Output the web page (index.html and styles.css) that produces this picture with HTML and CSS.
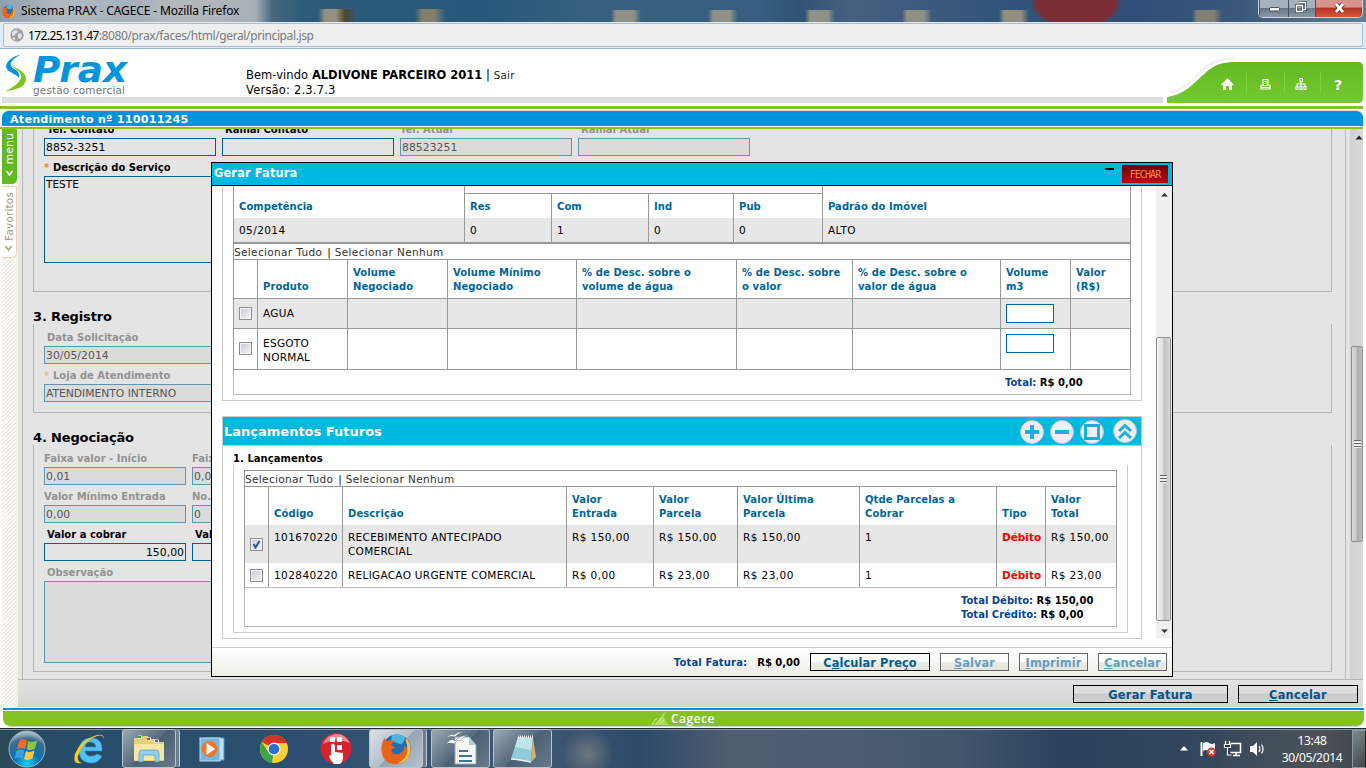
FILE: index.html
```html
<!DOCTYPE html>
<html lang="pt-BR">
<head>
<meta charset="utf-8">
<title>Sistema PRAX - CAGECE</title>
<link rel="stylesheet" href="styles.css">
</head>
<body>
<div class="screen">
  <div class="titlebar">
    <svg class="ff-small" viewBox="0 0 54 54"><use href="#firefox"/></svg>
    <span class="window-title">Sistema PRAX - CAGECE - Mozilla Firefox</span>
    <div class="win-controls">
      <span class="wc wc-min"><svg width="28" height="16"><rect x="9.5" y="7.500" width="10" height="3.500" rx="1" fill="#fff" stroke="#4a5563"/></svg></span>
      <span class="wc wc-max"><svg width="26" height="16"><path d="M9.500 2.500h7v7h-2M7.500 5.500h6v6h-6z" fill="none" stroke="#44505f" stroke-width="3"/><path d="M9.500 2.500h7v7h-2M7.500 5.500h6v6h-6z" fill="none" stroke="#fff" stroke-width="1.400"/></svg></span>
      <span class="wc wc-close"><svg width="46" height="16"><path d="M20 4l7 8M27 4l-7 8" stroke="#5b3a40" stroke-width="4.500"/><path d="M20 4l7 8M27 4l-7 8" stroke="#fff" stroke-width="2.800"/></svg></span>
    </div>
  </div>
  <div class="urlbar">
    <div class="urlfield">
      <svg width="14" height="14" viewBox="0 0 14 14"><circle cx="7" cy="7" r="6.700" fill="#a3a3a3"/><path d="M2 4l3-2 3 1-1 2-2 1-1 2-2-1zM8 6l3-1 1 3-2 3-2-1zM3 9l2 1 0 2-2-1z" fill="#e4e4e4"/></svg>
      <span class="url"><b>172.25.131.47</b>:8080/prax/faces/html/geral/principal.jsp</span>
    </div>
  </div>

  <header class="header">
    <svg class="logo" width="130" height="50" viewBox="0 0 130 50">
      <path d="M20 5.500C8 8 1 17 8 22c4 3 8 4 10 7 1-5-1-7-5-9-6-4-4-9 7-14.500z" fill="#0095de"/>
      <path d="M11 17.500c10 3 18 10 12 18-4 4-9 5-19 7 9-5 15-9 16-14 1-4-3-7-9-11z" fill="#7fc31c"/>
      <text class="logo-name" x="32" y="33" textLength="94" lengthAdjust="spacingAndGlyphs">Prax</text>
      <text class="logo-sub" x="32" y="44.500" textLength="92">gestão comercial</text>
    </svg>
    <div class="welcome">
      <div>Bem-vindo <b>ALDIVONE PARCEIRO 2011</b> | <a>Sair</a></div>
      <div class="version">Versão: 2.3.7.3</div>
    </div>
    <svg class="nav-tab" width="203" height="56" viewBox="0 0 203 56">
      <defs><linearGradient id="gt" x1="0" y1="0" x2="0" y2="1"><stop offset="0" stop-color="#62b922"/><stop offset="1" stop-color="#73ca30"/></linearGradient></defs>
      <path d="M10 43.500C26 41 32 32 42 22 52 12 60 10 74 10" fill="none" stroke="#f1f1f1" stroke-width="3"/>
      <path d="M3 48h4v7H3z" fill="#fff"/>
      <path d="M7 54V48C25 45 32 36 44 25 55 15 62 13 76 13H198q5 0 5 5v31q0 5-5 5z" fill="url(#gt)"/>
      <path d="M6 47C24 44 31 34 43 24 54 13.500 62 11.800 76 11.800" fill="none" stroke="#fff" stroke-width="2"/>
      <path d="M86.500 23v22M124.500 23v22M160.500 23v22" stroke="#7fd144"/>
      <path d="M61 36l6.500-7 6.500 7h-2v5h-3v-4h-3v4h-3v-5z" fill="#fff"/>
      <path d="M103 30.500h5v6h-5zM101 35.500v4.500h9v-4.500M101 38.500h9M104 32.500h3M104 34.500h3" fill="none" stroke="#fff" stroke-width="1.200"/>
      <path d="M140 29.500h2.500v3H140zM136 37.500h2v3h-2zM140 37.500h2v3h-2zM144 37.500h2v3h-2zM141 33v4M137 37v-2h8v2" fill="none" stroke="#fff" stroke-width="1.100"/>
      <text class="help" x="174" y="41">?</text>
    </svg>
  </header>
  <div class="line-green"></div>
  <div class="page-title">Atendimento nº 110011245</div>
  <div class="line-green2"></div>

  <div class="workspace">
    <aside class="side">
      <div class="side-tab menu"><span>menu</span><svg width="10" height="7"><path d="M1.500 1l3 4 3-4" fill="none" stroke="#fff" stroke-width="1.500"/></svg></div>
      <div class="side-tab fav"><span>Favoritos</span><svg width="10" height="7"><path d="M1.500 1l3 4 3-4" fill="none" stroke="#a8a07c" stroke-width="1.500"/></svg></div>
    </aside>
    <main class="main">
      <div class="scroll-area">
        <div class="form">
          <section class="box box-first">
            <div class="row wide"><label>Tel. Contato</label><label>Ramal Contato</label><label class="off flush">Tel. Atual</label><label class="off">Ramal Atual</label></div>
            <div class="row wide"><div class="inp">8852-3251</div><div class="inp"></div><div class="inp off">88523251</div><div class="inp off"></div></div>
            <div class="row wide"><label class="req"><i>*</i>Descrição do Serviço</label></div>
            <div class="area area-1">TESTE</div>
          </section>
          <h2>3. Registro</h2>
          <section class="box box-reg">
            <div class="row wide"><label class="off">Data Solicitação</label></div>
            <div class="row wide"><div class="inp off">30/05/2014</div></div>
            <div class="row wide"><label class="off req"><i>*</i>Loja de Atendimento</label></div>
            <div class="row wide"><div class="inp off caps">ATENDIMENTO INTERNO</div></div>
          </section>
          <h2>4. Negociação</h2>
          <section class="box box-neg">
            <div class="row slim"><label class="off flush">Faixa valor - Início</label><label class="off flush">Faixa valor - Fim</label></div>
            <div class="row slim"><div class="inp off">0,01</div><div class="inp off">0,00</div></div>
            <div class="row slim"><label class="off flush">Valor Mínimo Entrada</label><label class="off flush">No.</label></div>
            <div class="row slim"><div class="inp off">0,00</div><div class="inp off">0</div></div>
            <div class="row slim"><label>Valor a cobrar</label><label>Valor</label></div>
            <div class="row slim"><div class="inp num">150,00</div><div class="inp"></div></div>
            <div class="row slim"><label class="off">Observação</label></div>
            <div class="area area-2"></div>
          </section>
        </div>
        <div class="gutter"></div>
        <div class="page-scroll">
          <svg width="13" height="16"><path d="M5.500 10.500h7l-3.500-4z" fill="#222"/></svg>
          <div class="thumb thumb-page"><span class="grip"></span></div>
        </div>
      </div>
      <div class="toolbar"><div class="btn w155">Gerar Fatura</div><div class="btn w120"><u>C</u>ancelar</div></div>
    </main>
  </div>

  <div class="line-blue"></div>
  <footer class="footer"><svg width="19" height="14" viewBox="0 0 19 14"><path d="M0 13q8-1 12-10 3-4 4-2-3 2-1 7l4 5z" fill="#a9d86a"/><path d="M2 12l5-6M6 12l6-7M10 12l4-4" stroke="#d6edb4" fill="none"/></svg><span>Cagece</span></footer>

  <div class="taskbar">
    <svg class="start" width="40" height="40" viewBox="0 0 40 40">
      <defs><radialGradient id="orb" cx=".5" cy=".9" r=".85"><stop offset="0" stop-color="#15d1fb"/><stop offset=".4" stop-color="#0a72b4"/><stop offset=".8" stop-color="#3f6b8c"/><stop offset="1" stop-color="#a6bccb"/></radialGradient></defs>
      <circle cx="20" cy="20" r="18" fill="url(#orb)" stroke="#9fb6c5"/>
      <path d="M12 12q4-3 8-.5L18 20q-4-2-8 .5z" fill="#ee6a2e"/><path d="M21 12q4 2 9-.500L28 20q-5 2-8 .5z" fill="#8cc63e"/><path d="M9.500 22q4-2.500 8-.5l-2 8q-4-2-8 .5z" fill="#3f9ee0"/><path d="M19 22q4 2 8.500-.5l-2 8q-5 2.500-8.500.500z" fill="#fcc73a"/>
    </svg>
    <div class="slot ie"><svg width="34" height="34" viewBox="0 0 34 34"><path d="M30 19H13q1 6 7 5 3 0 5-2l5 2q-4 8-12 7Q7 30 7 18 8 6 19 6q12 0 11 13zM13 15h11q-1-5-6-5-4 0-5 5z" fill="#4fc1f3" stroke="#2a8bd0" stroke-width=".6" fill-rule="evenodd"/><path d="M32 8Q33 0 22 4 8 9 3 22q-3 11 7 9-5-1-4-7Q11 9 25 4q7-2 7 4z" fill="#f8c91c"/></svg></div>
    <div class="task t1"><svg width="34" height="34" viewBox="0 0 34 34"><path d="M2 6h6l1-2h7l1 3h6l1 3h8v19H2z" fill="#e9cf7a"/><path d="M2 12h30v16H2z" fill="#f8e7a4"/><path d="M6 5h4M15 7h4M22 9h5" stroke="#fff" stroke-width="3"/><path d="M6 5h3" stroke="#2aa335" stroke-width="2"/><path d="M15 7h3" stroke="#d63a2a" stroke-width="2"/><path d="M23 9h3" stroke="#2d6fd6" stroke-width="2"/><path d="M7 30v-9q0-3 3-3h14q3 0 3 3v9h-4v-7H11v7z" fill="#8fd0ee" stroke="#4f9cc4" stroke-width=".7"/></svg></div>
    <div class="slot"><svg width="34" height="34" viewBox="0 0 34 34"><rect x="10" y="6" width="19" height="22" fill="#bfe0f2" stroke="#4b9ac8"/><rect x="5" y="6" width="20" height="23" fill="#78b7dd" stroke="#b9e2f6"/><circle cx="14.500" cy="17" r="8" fill="#f0782a"/><path d="M11.500 11l8.500 6-8.500 6z" fill="#fff"/></svg></div>
    <div class="slot"><svg width="32" height="32" viewBox="0 0 32 32"><circle cx="16" cy="16" r="14" fill="#fbd02e"/><path d="M16 16L4 9a14 14 0 0 1 25 1H16z" fill="#d93025"/><path d="M16 16l-2 14A14 14 0 0 1 4 9l6 10z" fill="#3ca64a"/><circle cx="16" cy="16" r="6.500" fill="#fff"/><circle cx="16" cy="16" r="5.300" fill="#2b72cc"/></svg></div>
    <div class="slot"><svg width="34" height="34" viewBox="0 0 34 34"><circle cx="17" cy="16.500" r="15.500" fill="#d9222f"/><path d="M4 12q4-10 14-10 8 0 13 9-14-6-27 1z" fill="#f08a8d"/><path d="M11 5h5v5h-5zM18 5h5v5h-5zM18 13h5v5h-5z" fill="#fff"/><path d="M12 13q3-3 4 1v6l8 1v5q-1 6-4 6h-5q-4-4-5-8l2-1z" fill="#fff"/></svg></div>
    <div class="task t2"><svg width="34" height="34" viewBox="0 0 54 54">
      <g id="firefox"><circle cx="28" cy="26" r="22" fill="#1f6cb8"/><path d="M20 6q12-6 22 4l-6 10q-8-2-16-6z" fill="#53b4e6"/><path d="M47 15q7 14-1 26-9 12-24 10Q6 48 4 30 3 18 9 9q1 5 4 6 5-3 11-1l-5 7q4 2 7 3-4 4-7 4 3 9 12 7 10-3 9-14 5 5 4 9 5-8-1-20 2 2 4 5z" fill="#e8641b"/><path d="M45 12q9 14 1 29-7 9-17 9 15-7 16-20 1-9-3-18z" fill="#fbc834"/></g></svg></div>
    <div class="task t3"><svg width="34" height="34" viewBox="0 0 34 34"><path d="M11 5h14l7 8v19H11z" fill="#f3f7fa" stroke="#98a8b5"/><path d="M25 5v8h7z" fill="#b5c8d6"/><path d="M15 19h9M15 24h13M15 29h13" stroke="#496f92" stroke-width="2"/><path d="M2 12q6-7 9-3 5-6 14-6-7 2-9 6-3-2-6 3-3-2-8 0zM2 6q4-5 8-3 4-4 10-3-6 1-9 5-4-2-9 1z" fill="#fff" stroke="#566b7b" stroke-width=".5"/></svg></div>
    <div class="task t4"><svg width="34" height="34" viewBox="0 0 34 34"><path d="M12 5l15 1-2 24-20-3z" fill="#8fcbd8"/><path d="M12 5l15 1-2 12-16-3z" fill="#bfe5ea"/><path d="M27 6l3 19-5 5z" fill="#d8b36a"/><path d="M12 5h15" stroke="#e9eef1" stroke-width="3" stroke-dasharray="1 1"/><path d="M5 27q5 0 20 3" stroke="#e6f4f6" stroke-width="1.500" fill="none"/></svg></div>
    <div class="tray">
      <svg width="90" height="20" viewBox="0 0 90 20"><path d="M3 11.500h8L7 7z" fill="#fff"/><path d="M24.500 3v14" stroke="#fff" stroke-width="2"/><path d="M26 4q4-2 6 0 3 2 6 0v8q-4 2-6 0-3-2-6 0z" fill="#fff"/><circle cx="34.500" cy="13" r="4.500" fill="#d83a2c"/><path d="M32.500 11l4 4M36.500 11l-4 4" stroke="#fff" stroke-width="1.500"/><path d="M53.500 4.500h10v9H51.500M56 16.500h7M59 13v3" fill="none" stroke="#fff" stroke-width="1.500"/><path d="M48.500 2v3M52.500 2v3M47.500 5.500h6v3h-6zM50.500 8v8h4" stroke="#fff" fill="#223040" stroke-width="1.200"/><path d="M73 7h3l4-4v14l-4-4h-3z" fill="#fff"/><path d="M82 7q2 3 0 6M84.500 5.500q3 4.500 0 9" stroke="#fff" fill="none" stroke-width="1.200"/></svg>
      <div class="clock"><span>13:48</span><span>30/05/2014</span></div>
      <div class="peek"></div>
    </div>
  </div>

  <div class="modal">
    <div class="modal-title"><span>Gerar Fatura</span><span class="minimize"></span><span class="fechar">FECHAR</span></div>
    <div class="modal-body">
      <div class="content">
        <div class="panel panel-a">
          <div class="grid ga gh-spacer"><div></div><div class="span4"></div><div></div></div>
          <div class="grid ga gh-a"><div>Competência</div><div class="tl">Res</div><div class="tl">Com</div><div class="tl">Ind</div><div class="tl">Pub</div><div>Padrão do Imóvel</div></div>
          <div class="grid ga gr-a"><div>05/2014</div><div>0</div><div>1</div><div>0</div><div>0</div><div>ALTO</div></div>
          <div class="select s1"><a>Selecionar Tudo</a><em>|</em><a>Selecionar Nenhum</a></div>
          <div class="grid gb head"><div></div><div>Produto</div><div>Volume<br>Negociado</div><div>Volume Mínimo<br>Negociado</div><div>% de Desc. sobre o<br>volume de água</div><div>% de Desc. sobre<br>o valor</div><div>% de Desc. sobre o<br>valor de água</div><div>Volume<br>m3</div><div>Valor<br>(R$)</div></div>
          <div class="grid gb shade r30"><div class="ck"><span class="check"></span></div><div class="up">AGUA</div><div></div><div></div><div></div><div></div><div></div><div class="fi"><span class="field"></span></div><div></div></div>
          <div class="grid gb r41"><div class="ck"><span class="check"></span></div><div class="up">ESGOTO<br>NORMAL</div><div></div><div></div><div></div><div></div><div></div><div class="fi"><span class="field"></span></div><div></div></div>
          <div class="total one"><p>Total: <b>R$ 0,00</b></p></div>
        </div>
        <div class="panel-title"><span>Lançamentos Futuros</span>
          <div class="rounds">
            <svg width="24" height="26" viewBox="0 0 24 26"><circle cx="12" cy="13" r="11.500" fill="#eef0f2" stroke="#b9c4c9"/><path d="M12 6v14M5 13h14" stroke="#18b0e2" stroke-width="4"/></svg>
            <svg width="24" height="26" viewBox="0 0 24 26"><circle cx="12" cy="13" r="11.500" fill="#eef0f2" stroke="#b9c4c9"/><path d="M5 13h14" stroke="#18b0e2" stroke-width="4"/></svg>
            <svg width="24" height="26" viewBox="0 0 24 26"><circle cx="12" cy="13" r="11.500" fill="#eef0f2" stroke="#b9c4c9"/><path d="M5.500 6.500h13v13h-13z" fill="none" stroke="#18b0e2" stroke-width="3"/></svg>
            <svg class="last" width="24" height="26" viewBox="0 0 24 26"><circle cx="12" cy="12" r="11.500" fill="#eef0f2" stroke="#b9c4c9"/><path d="M6 12l6-5.500 6 5.500M6 19l6-5.500 6 5.500" fill="none" stroke="#18b0e2" stroke-width="3"/></svg>
          </div>
        </div>
        <div class="panel panel-b">
          <h3>1. Lançamentos</h3>
          <div class="inner">
            <div class="select s2"><a>Selecionar Tudo</a><em>|</em><a>Selecionar Nenhum</a></div>
            <div class="grid gc head"><div></div><div>Código</div><div>Descrição</div><div>Valor<br>Entrada</div><div>Valor<br>Parcela</div><div>Valor Última<br>Parcela</div><div>Qtde Parcelas a<br>Cobrar</div><div>Tipo</div><div>Valor<br>Total</div></div>
            <div class="grid gc shade r38"><div class="ck"><span class="check on"><svg width="9" height="9"><path d="M1.500 4l2 3.500L7.500 1" fill="none" stroke="#3a4f9e" stroke-width="2"/></svg></span></div><div>101670220</div><div class="up">RECEBIMENTO ANTECIPADO<br>COMERCIAL</div><div>R$ 150,00</div><div>R$ 150,00</div><div>R$ 150,00</div><div>1</div><div class="deb">Débito</div><div>R$ 150,00</div></div>
            <div class="grid gc r24"><div class="ck"><span class="check"></span></div><div>102840220</div><div class="up">RELIGACAO URGENTE COMERCIAL</div><div>R$ 0,00</div><div>R$ 23,00</div><div>R$ 23,00</div><div>1</div><div class="deb">Débito</div><div>R$ 23,00</div></div>
            <div class="total two"><p>Total Débito: <b>R$ 150,00</b></p><p>Total Crédito: <b>R$ 0,00</b></p></div>
          </div>
        </div>
      </div>
      <div class="modal-scroll">
        <svg width="15" height="16"><path d="M5 10.500h7L8.500 7z" fill="#333"/></svg>
        <div class="thumb thumb-modal"><span class="grip"></span></div>
        <svg class="down" width="15" height="16"><path d="M5 7.500h7L8.500 11z" fill="#333"/></svg>
      </div>
    </div>
    <div class="modal-foot">
      <span class="tf">Total Fatura:</span><b class="tv">R$ 0,00</b>
      <div class="btn w120">C<u>a</u>lcular Preço</div><div class="btn dis"><u>S</u>alvar</div><div class="btn dis"><u>I</u>mprimir</div><div class="btn dis"><u>C</u>ancelar</div>
    </div>
  </div>
</div>
</body>
</html>
```

FILE: styles.css
```css
* { box-sizing: border-box; margin: 0; padding: 0; }
body { width: 1366px; height: 768px; overflow: hidden; background: #fff; font: 10.5px/14px "DejaVu Sans", Verdana, sans-serif; color: #000; }
svg { display: block; flex: none; }
.screen { position: relative; width: 1366px; height: 768px; display: flex; flex-direction: column; overflow: hidden; }
.screen > * { flex: none; }

/* browser chrome */
.titlebar { height: 22px; display: flex; align-items: center; background:
  radial-gradient(ellipse 46px 28px at 1076px 2px, #7c2d33 85%, transparent 100%),
  linear-gradient(90deg, transparent 611px, #8f9184 616px 634px, transparent 641px, transparent 708px, #8f9184 713px 730px, transparent 738px, transparent 805px, #8f9184 810px 828px, transparent 835px, transparent 902px, #8f9184 907px 924px, transparent 932px, transparent 999px, #938f7e 1004px 1021px, transparent 1029px, transparent 1192px, #837f75 1197px 1214px, transparent 1222px) 0 10px no-repeat,
  linear-gradient(90deg, transparent 318px, #96917f 325px 336px, #51442f 345px, transparent 356px, transparent 415px, #857f69 422px 434px, transparent 446px) 0 9px no-repeat,
  linear-gradient(90deg, #8e9fac 0, #b2bac0 60px, #a6b1ba 130px, #b5b9bd 180px, #a8b0b6 255px, #49697f 272px, #2d5c79 300px, #27587a 480px, #39617f 600px, #375e80 760px, #2f5474 800px, #475f80 850px, #31557a 1000px, #2e4f76 1140px, #3b587b 1240px, #687c90 1366px); }
.ff-small { width: 15px; height: 15px; margin-left: 1px; }
.window-title { margin-left: 5px; font: 12px/22px "Noto Sans", sans-serif; letter-spacing: -.12px; white-space: nowrap; }
.win-controls { margin: 0 3px 0 auto; height: 18px; align-self: flex-start; display: flex; border: 1px solid #d0d6dd; border-top: 0; border-radius: 0 0 5px 5px; overflow: hidden; }
.wc { height: 17px; border-left: 1px solid #45515e; background: linear-gradient(#a7b1bc 45%, #687788 50%, #8b99a7); }
.wc-close { background: linear-gradient(#d8948a 40%, #b73221 50%, #d25a3a); }
.urlbar { height: 27px; padding: 1px 3px 1px; background: #dfeaf6; border-bottom: 1px solid #9cb5d2; }
.urlfield { height: 24px; border: 1px solid #a9bed2; border-radius: 2px; background: #efefef; display: flex; align-items: center; padding-left: 6px; gap: 4px; }
.url { font: 12px/22px "Noto Sans", sans-serif; padding-top: 1px; color: #7b7b7b; white-space: nowrap; letter-spacing: -.38px; }
.url b { font-weight: normal; color: #000; letter-spacing: -.58px; }

/* page header */
.header { height: 57px; display: flex; align-items: flex-start; background: linear-gradient(#dedede, #dedede) 2px 48px / 1161px 6px no-repeat #fff; }
.logo { margin-left: 1px; }
.logo-name { font: italic bold 35px "DejaVu Sans", sans-serif; fill: #0095de; }
.logo-sub { font: 10.5px "DejaVu Sans", sans-serif; fill: #777; }
.welcome { margin: 19px 0 0 115px; font-size: 11.5px; line-height: 15px; white-space: nowrap; letter-spacing: .06px; }
.welcome b { letter-spacing: 0; }
.version { letter-spacing: .2px; }
.welcome a { font-size: 10.3px; color: #222; letter-spacing: .3px; }
.nav-tab { margin: 0 3px 0 auto; }
.help { font: bold 14px "DejaVu Sans", sans-serif; fill: #fff; }
.line-green { height: 3px; margin-right: 3px; background: #85c226; }
.page-title { height: 16px; margin: 1px 3px 0 2px; border-top: 1px solid #d8d8d8; border-radius: 7px 7px 0 0; background: #0093dd; color: #fff; font-weight: bold; font-size: 11.2px; line-height: 17px; padding-left: 8px; letter-spacing: .2px; }
.line-green2 { height: 3px; margin-right: 3px; border-top: 1px solid #fff; background: #85c226; }

/* workspace */
.workspace { height: 578px; margin: 0 3px 0 2px; display: flex; }
.side { width: 16px; flex: none; border-right: 2px solid #f1f1e6; background: repeating-linear-gradient(135deg, #fff 0 1.400px, #f0eee2 1.400px 2.800px); }
.side-tab { width: 15px; display: flex; flex-direction: column; align-items: center; border-radius: 0 0 5px 0; }
.side-tab span { writing-mode: vertical-rl; transform: rotate(180deg); line-height: 15px; }
.menu { height: 55px; padding-top: 4px; gap: 6px; background: #62b922; color: #fff; font-size: 11px; }
.fav { height: 72px; margin-top: 2px; padding-top: 5px; gap: 4px; background: #fff; border: solid #e3d8b4; border-width: 1px 1px 1px 0; color: #a59a78; }
.fav span { font-size: 10.4px; letter-spacing: .2px; }
.main { flex: 1; min-width: 0; display: flex; flex-direction: column; background: #e4e4e4; }
.scroll-area { height: 550px; display: flex; overflow: hidden; margin-left: 4px; border-left: 1px solid #b5b5b5; }
.form { flex: none; width: 1309px; margin-left: 10px; }
.gutter { flex: none; width: 5px; margin-left: 3px; border-left: 1px solid #bbb; }
.box { width: 1299px; border: 1px solid #b5b5b5; border-top: 0; padding: 2px 0 0 10px; overflow: hidden; }
.box-first { height: 163px; padding-top: 0; }
.box-first .row:first-child { margin-top: -11px; }
.box-reg { height: 89px; }
.box-neg { height: 227px; }
.form h2 { height: 32px; padding-top: 16px; font-size: 13px; line-height: 17px; letter-spacing: -.15px; }
.row { display: grid; }
.wide { grid-template-columns: repeat(4, 172px); column-gap: 6px; }
.slim { grid-template-columns: repeat(2, 142px); column-gap: 6px; }
label { height: 20px; padding: 5px 0 0 3px; font-weight: bold; font-size: 10px; line-height: 14px; white-space: nowrap; }
label.off { color: #929292; }
label.flush { padding-left: 0; }
label.req { padding-left: 0; }
label i { display: inline-block; width: 9px; color: #e08a28; font-style: normal; }
label.off i { color: #e5bd90; }
.inp { height: 18px; border: 1px solid #005f8f; line-height: 17px; font-size: 10.8px; padding: 0 1px; white-space: nowrap; letter-spacing: .05px; }
.inp.off { border-color: #5e95b5; background: #dbdbdb; color: #555; }
.inp.caps { letter-spacing: -.05px; }
.num { text-align: right; }
.area { width: 880px; border: 1px solid #005f8f; padding-left: 1px; }
.area-1 { height: 87px; line-height: 15px; }
.area-2 { height: 82px; border-color: #5e95b5; background: #dbdbdb; }
.page-scroll { flex: none; width: 13px; background: linear-gradient(90deg, #d0d0d0, #dadada); }
.toolbar { height: 28px; border-top: 1px solid #b5b5b5; background: linear-gradient(#e3e3e3, #d4d5cf); display: flex; justify-content: flex-end; gap: 10px; padding: 5px 5px 0 0; }
.btn { height: 18px; width: 69px; border: 1px solid #000; background: linear-gradient(#fff 45%, #e9e9e4 55%, #e6e6e0); text-align: center; font-weight: bold; font-size: 11.400px; letter-spacing: .08px; line-height: 18px; color: #006090; white-space: nowrap; }
.toolbar .btn { background: linear-gradient(#dedede 45%, #c8c8c8 50%, #d2d2d2); color: #00558a; letter-spacing: .25px; }
.btn.w155 { width: 155px; }
.btn.w120 { width: 120px; }
.btn.dis { border-color: #666; color: #659dbd; }
.line-blue { height: 2px; margin: 1px 2px 1px 3px; background: #0093dd; }
.footer { height: 16px; margin: 0 2px 1px 3px; background: #85c226; border-bottom: 1px solid #cfd8c4; border-radius: 0 0 8px 8px; display: flex; align-items: center; gap: 2px; padding-left: 647px; color: #fff; }
.footer span { font: 600 12px/14px "Open Sans", sans-serif; letter-spacing: .5px; }

/* scrollbars */
.thumb { width: 14px; border: 1px solid #8f8f8f; border-radius: 2px; background: linear-gradient(90deg, #f6f6f6, #dfdfdf 45%, #c2c2c4 55%, #d8d8da); display: grid; place-items: center; }
.grip { width: 7px; height: 8px; background: repeating-linear-gradient(#666 0 1px, #eee 1px 3px); }
.thumb-page { height: 196px; margin: 201px 0 0 1px; width: 12px; background: linear-gradient(90deg, #dadada, #c6c6c6 45%, #aeaeae 55%, #bdbdbd); }
.modal-scroll { width: 16px; height: 452px; background: #f0f0f0; display: flex; flex-direction: column; }
.thumb-modal { height: 284px; margin: 135px 0 0 0; width: 15px; }
.down { margin-top: 1px; }

/* modal */
.modal { position: absolute; left: 211px; top: 162px; width: 962px; height: 515px; border: 1px solid #000; background: #fff; }
.modal-title { height: 23px; border-bottom: 1px solid #000; background: #00b9e0; color: #fff; font-weight: bold; font-size: 11.400px; letter-spacing: .15px; line-height: 21px; display: flex; padding: 0 4px 0 2px; }
.minimize { width: 9px; height: 2px; margin: 5px 8px 0 auto; background: #000; }
.fechar { width: 46px; height: 18px; margin-top: 2px; background: linear-gradient(#6e0203, #b80a08); color: #ff8a55; font: 10px/19px "DejaVu Sans Mono", monospace; text-align: center; letter-spacing: -.9px; }
.modal-body { height: 461px; display: flex; }
.content { width: 944px; padding-left: 10px; }
.panel { width: 920px; border: 1px solid #ccc; border-top: 0; padding-left: 10px; }
.panel-a { height: 215px; }
.grid { display: grid; font-size: 10.5px; letter-spacing: .42px; }
.grid > div { border-left: 1px solid #999; padding: 0 0 0 5px; white-space: nowrap; overflow: hidden; }
.grid > div:last-child { border-right: 1px solid #999; }
.ga { grid-template-columns: 231px 87px 97px 85px 89px 309px; width: 898px; }
.gb { grid-template-columns: 24px 90px 100px 129px 160px 116px 148px 70px 61px; width: 898px; border-bottom: 1px solid #999; }
.gc { grid-template-columns: 24px 74px 224px 87px 84px 122px 137px 49px 72px; width: 873px; }
.gh-spacer { height: 7px; }
.span4 { grid-column: span 4; }
.gh-a { height: 25px; font-weight: bold; font-size: 10px; letter-spacing: .05px; color: #069; line-height: 27px; }
.gh-a .tl { border-top: 1px solid #999; line-height: 25px; }
.gr-a { height: 26px; background: #e7e7e7; border-bottom: 2px solid #999; line-height: 25px; }
.select { display: flex; border: 1px solid #999; border-top: 0; font-size: 10.500px; color: #333; line-height: 17px; white-space: nowrap; }
.select a { letter-spacing: .35px; }
.select em { font-style: normal; margin: 0 4px 0 5px; color: #000; }
.s1 { width: 898px; height: 16px; }
.s2 { width: 873px; height: 17px; border-top: 1px solid #999; }
.gb.head { height: 39px; }
.gc.head { height: 38px; }
.head > div { display: flex; align-items: flex-end; padding-bottom: 4px; font-size: 10px; font-weight: bold; color: #069; line-height: 14px; letter-spacing: .1px; }
.shade { background: #e7e7e7; }
.gb > div { padding-top: 7px; }
.gb.head > div { padding-top: 0; }
.r30 { height: 30px; }
.r41 { height: 41px; }
.r38 { height: 38px; }
.r24 { height: 25px; border-bottom: 1px solid #bbb; }
.r38 > div, .r24 > div { padding-top: 5px; }
.grid > .up { letter-spacing: .29px; }
.grid > .ck { padding-top: 0; display: flex; align-items: center; }
.r41 .check { margin-bottom: 1px; }
.check { width: 13px; height: 13px; border: 1px solid #8e8f8f; background: linear-gradient(135deg, #c5cad4, #f6f6f6); box-shadow: inset 0 0 0 1px #f4f4f4; display: block; padding: 1px; }
.gb > .fi { padding-top: 5px; }
.field { display: block; width: 48px; height: 19px; background: #fff; border: 1px solid #069; }
.total { border: 1px solid #bbb; border-top: 0; font-weight: bold; font-size: 10px; line-height: 14px; color: #0a4590; }
.total b { color: #000; }
.total.one { width: 898px; height: 25px; padding: 6px 0 0 771px; }
.total.two { width: 873px; height: 39px; padding: 6px 0 0 716px; }
.panel-title { width: 920px; height: 30px; margin-top: 15px; border: 1px solid #c5c9cc; background: #00b9e0; color: #fff; font-size: 13px; font-weight: bold; line-height: 29px; padding-left: 1px; display: flex; justify-content: space-between; }
.rounds { display: flex; gap: 6px; padding: 2px 4px 0 0; }
.rounds .last { margin-left: 3px; }
.panel-b { height: 193px; }
.panel-b h3 { height: 19px; font-size: 10px; line-height: 13px; padding-top: 6px; letter-spacing: .05px; }
.inner { width: 895px; height: 168px; border: 1px solid #ccc; border-top: 0; padding: 5px 0 0 10px; }
.grid > .deb { color: #f00; font-weight: bold; letter-spacing: 0; }
.modal-foot { height: 29px; border-top: 1px solid #ccc; background: linear-gradient(#fff, #eeeee6); display: flex; justify-content: flex-end; padding: 5px 5px 0 0; }
.modal-foot .btn { margin-left: 10px; }
.modal-foot .btn.dis { width: 69px; }
.tf, .tv { font-size: 10px; font-weight: bold; line-height: 19px; color: #0a4590; }
.tf { letter-spacing: .15px; }
.tv { color: #000; margin-left: 10px; }

/* taskbar */
.taskbar { height: 40px; display: flex; align-items: center; border-top: 1px solid #1c2a33; box-shadow: inset 0 1px 0 #8b98a0; background:
  radial-gradient(circle at 588px 25px, rgba(150,150,140,.55), transparent 26px),
  linear-gradient(90deg, #2b4a58, #284d69 60px, #2c4f70 300px, #415870 540px, #2c4a69 640px, #4f5d70 730px, #4a5c72 860px, #41566b 960px, #2b435c 1060px, #32475c 1200px, #4d5257 1320px, #3c454b); }
.start { margin-left: 7px; }
.slot { width: 62px; display: grid; place-items: center; }
.slot.ie { width: 75px; padding-left: 8px; }
.task { height: 39px; width: 59px; border: 1px solid #b9c4cb; border-radius: 3px; background: linear-gradient(135deg, #9aa9b4 0, #55697a 50%, #4b6073 51%, #667a8a); display: grid; place-items: center; }
.t1, .t2 { width: 54px; box-shadow: 4px 0 0 -1px #6d7f8d, 5px 0 0 -1px #c1ccd2; }
.t1 { margin-right: 5px; }
.t2 { margin: 0 8px 0 2px; background: linear-gradient(135deg, #dbe2e7 0, #b3bfca 50%, #94a5b3 51%, #b6c2cc); }
.t3 { margin-right: 3px; }
.tray { margin-left: auto; display: flex; align-items: center; height: 100%; }
.tray > svg { margin-right: 5px; }
.clock { width: 80px; display: flex; flex-direction: column; align-items: center; font: 12px/17px "Noto Sans", sans-serif; letter-spacing: -.35px; color: #fff; }
.peek { width: 14px; height: 38px; border: 1px solid #8c969c; border-right-color: #222; background: linear-gradient(135deg, #7d8990, #3f484e); }
```
